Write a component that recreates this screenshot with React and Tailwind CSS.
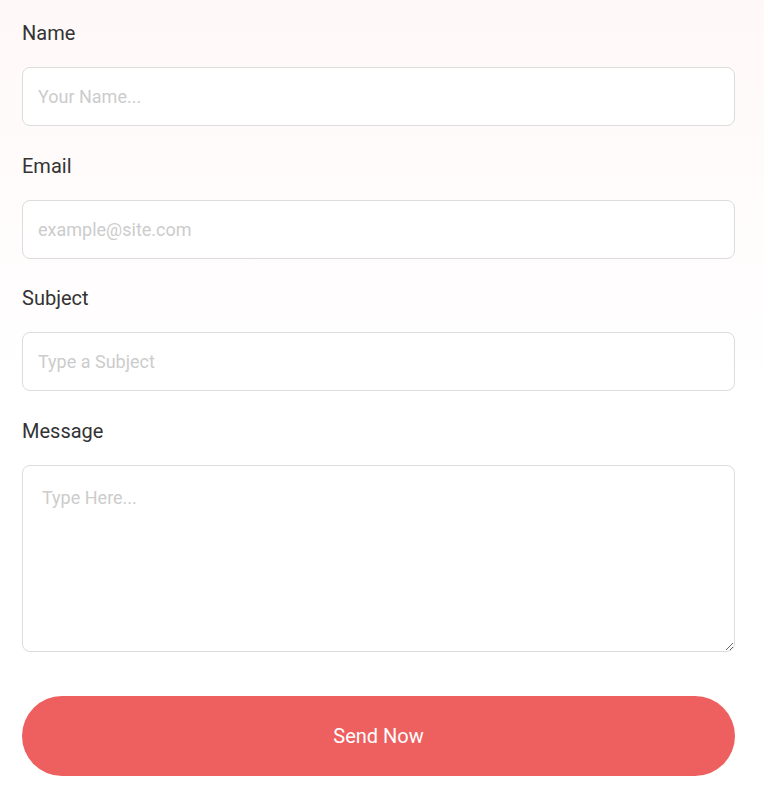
import React from "react";

function Label({ children }) {
  return (
    <label className="block text-[20px] leading-[27px] font-normal text-[#333333] mb-[20px]">
      {children}
    </label>
  );
}

function Field({ label, placeholder, type = "text" }) {
  return (
    <div className="mb-[26.5px]">
      <Label>{label}</Label>
      <input
        type={type}
        placeholder={placeholder}
        className="block w-full h-[59px] rounded-[8px] border border-[#dcdcdc] bg-white px-[15px] text-[18px] text-[#333] placeholder:text-[#cccccc] outline-none"
      />
    </div>
  );
}

export default function App() {
  return (
    <div className="min-h-[798px] w-full bg-gradient-to-b from-[#fff8f8] via-white to-white font-['Roboto','Liberation_Sans',sans-serif]">
      <form className="flex flex-col pl-[22px] pt-[20px] pr-[29px]" onSubmit={(e) => e.preventDefault()}>
        <Field label="Name" placeholder="Your Name..." />
        <Field label="Email" placeholder="example@site.com" type="email" />
        <Field label="Subject" placeholder="Type a Subject" />
        <div>
          <Label>Message</Label>
          <textarea
            placeholder="Type Here..."
            className="block w-full h-[187px] rounded-[8px] border border-[#dcdcdc] bg-white px-[19px] py-[19px] text-[18px] leading-[26px] text-[#333] placeholder:text-[#cccccc] outline-none"
          />
        </div>
        <button
          type="submit"
          className="mt-[44px] block w-full h-[80px] rounded-full bg-[#ee5f5f] text-white text-[20px]"
        >
          Send Now
        </button>
      </form>
    </div>
  );
}
